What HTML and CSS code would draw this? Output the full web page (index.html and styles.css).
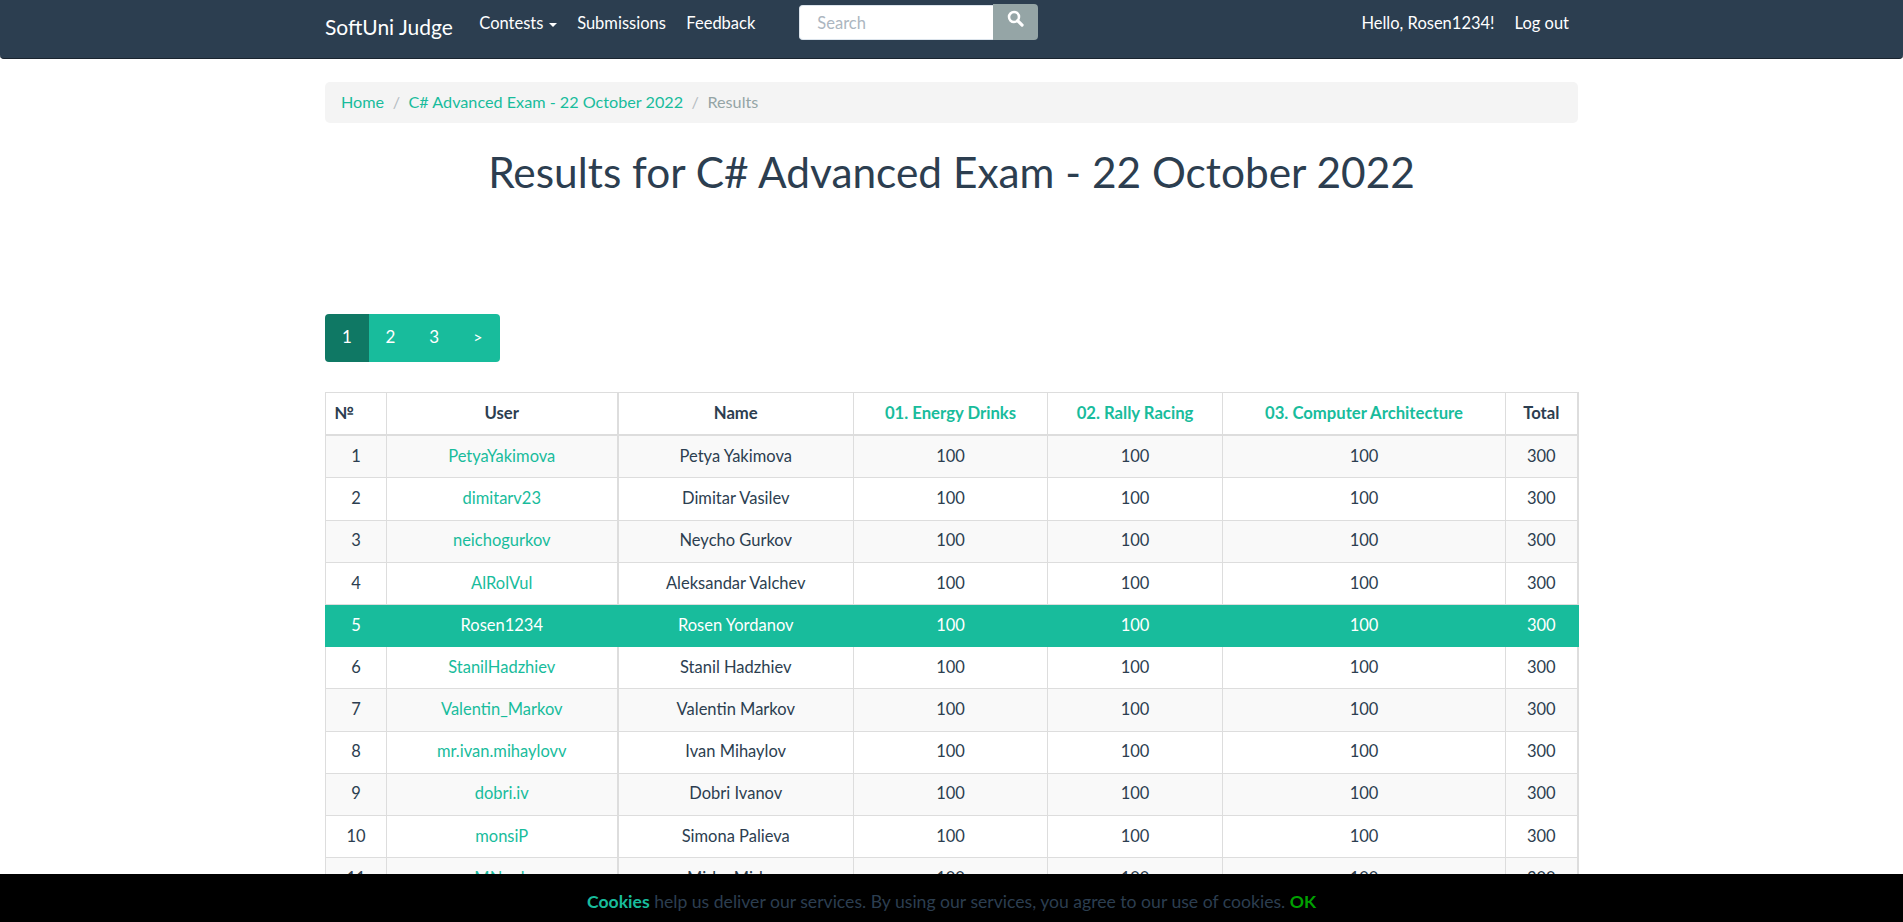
FILE: index.html

```html
<!DOCTYPE html>
<html>
<head>
<meta charset="utf-8">
<title>Results for C# Advanced Exam - 22 October 2022</title>
<link rel="stylesheet" href="styles.css">
</head>

<body>
<nav class="navbar">
    <div class="nav-inner">
        <a class="brand" href="#">SoftUni Judge</a>
        <a class="nav-link" href="#">Contests <span class="caret"></span></a>
        <a class="nav-link" href="#">Submissions</a>
        <a class="nav-link" href="#">Feedback</a>
        <form class="search">
            <input class="search-input" type="text" placeholder="Search">
            <button class="search-btn" type="button">
                <svg width="17" height="17" viewBox="0 0 16 16"><circle cx="6.6" cy="6.6" r="4.7" fill="none" stroke="#fff" stroke-width="2.4"/><path d="M10 10l4.2 4.2" stroke="#fff" stroke-width="3" stroke-linecap="round"/></svg>
            </button>
        </form>
        <div class="nav-right">
            <a class="nav-link" href="#">Hello, Rosen1234!</a>
            <a class="nav-link" href="#">Log out</a>
        </div>
    </div>
</nav>

<div class="container">
    <ol class="breadcrumb">
        <li><a href="#">Home</a></li>
        <li><a href="#">C# Advanced Exam - 22 October 2022</a></li>
        <li class="current">Results</li>
    </ol>

    <h1 class="title">Results for C# Advanced Exam - 22 October 2022</h1>

    <ul class="pagination">
        <li class="active"><a href="#">1</a></li>
        <li><a href="#">2</a></li>
        <li><a href="#">3</a></li>
        <li><a class="next" href="#">&gt;</a></li>
    </ul>

    <table class="results">
        <colgroup>
            <col class="c-num"><col class="c-user"><col class="c-name"><col class="c-t1"><col class="c-t2"><col class="c-t3"><col class="c-total">
        </colgroup>
        <thead>
            <tr>
                <th class="left">№</th>
                <th>User</th>
                <th>Name</th>
                <th><a href="#">01. Energy Drinks</a></th>
                <th><a href="#">02. Rally Racing</a></th>
                <th><a href="#">03. Computer Architecture</a></th>
                <th>Total</th>
            </tr>
        </thead>
        <tbody>
            <tr><td>1</td><td><a href="#">PetyaYakimova</a></td><td>Petya Yakimova</td><td>100</td><td>100</td><td>100</td><td>300</td></tr>
            <tr><td>2</td><td><a href="#">dimitarv23</a></td><td>Dimitar Vasilev</td><td>100</td><td>100</td><td>100</td><td>300</td></tr>
            <tr><td>3</td><td><a href="#">neichogurkov</a></td><td>Neycho Gurkov</td><td>100</td><td>100</td><td>100</td><td>300</td></tr>
            <tr><td>4</td><td><a href="#">AlRolVul</a></td><td>Aleksandar Valchev</td><td>100</td><td>100</td><td>100</td><td>300</td></tr>
            <tr class="me"><td>5</td><td><a href="#">Rosen1234</a></td><td>Rosen Yordanov</td><td>100</td><td>100</td><td>100</td><td>300</td></tr>
            <tr><td>6</td><td><a href="#">StanilHadzhiev</a></td><td>Stanil Hadzhiev</td><td>100</td><td>100</td><td>100</td><td>300</td></tr>
            <tr><td>7</td><td><a href="#">Valentin_Markov</a></td><td>Valentin Markov</td><td>100</td><td>100</td><td>100</td><td>300</td></tr>
            <tr><td>8</td><td><a href="#">mr.ivan.mihaylovv</a></td><td>Ivan Mihaylov</td><td>100</td><td>100</td><td>100</td><td>300</td></tr>
            <tr><td>9</td><td><a href="#">dobri.iv</a></td><td>Dobri Ivanov</td><td>100</td><td>100</td><td>100</td><td>300</td></tr>
            <tr><td>10</td><td><a href="#">monsiP</a></td><td>Simona Palieva</td><td>100</td><td>100</td><td>100</td><td>300</td></tr>
            <tr><td>11</td><td><a href="#">MNook</a></td><td>Mirko Mirkov</td><td>100</td><td>100</td><td>100</td><td>300</td></tr>
        </tbody>
    </table>
</div>

<div class="cookies">
    <span class="cookies-word">Cookies</span> help us deliver our services. By using our services, you agree to our use of cookies. <a class="cookies-ok" href="#">OK</a>
</div>
</body>
</html>
```

FILE: styles.css

```css
html, body {
  height: 100%;
  overflow: hidden;
}

body {
  margin: 0;
  font-family: Lato, "Liberation Sans", sans-serif;
  font-size: 16.5px;
  line-height: 1.42857;
  color: #2c3e50;
  background: #fff;
}

a {
  color: #18bc9c;
  text-decoration: none;
}

.navbar {
  height: 59px;
  box-sizing: border-box;
  background: #2c3e50;
  border-bottom: 1px solid #1a242f;
  border-radius: 0 0 4px 4px;
}

.nav-inner {
  width: 1253px;
  margin: 0 auto;
  display: flex;
  align-items: flex-start;
}

.brand {
  color: #fff;
  font-size: 21px;
  line-height: 27px;
  padding-top: 13px;
  margin-right: 26.5px;
}

.nav-link {
  color: #fff;
  font-size: 16.5px;
  line-height: 23px;
  padding-top: 12px;
  margin-right: 20.5px;
}

.caret {
  display: inline-block;
  width: 0;
  height: 0;
  margin-left: 1px;
  vertical-align: middle;
  border-top: 4px solid #fff;
  border-left: 4px solid transparent;
  border-right: 4px solid transparent;
}

.search {
  display: flex;
  align-items: flex-start;
  margin: 4px 0 0 23.5px;
}

.search-input {
  width: 194px;
  height: 35px;
  box-sizing: border-box;
  padding: 0 17px;
  border: 1px solid #dce4ec;
  border-right: 0;
  border-radius: 4px 0 0 4px;
  font-family: inherit;
  font-size: 16.5px;
  color: #2c3e50;
  background: #fff;
  margin-top: 1px;
}

.search-input::placeholder {
  color: #acb6c0;
}

.search-btn {
  width: 45px;
  height: 36px;
  padding: 0 0 5px;
  border: 0;
  border-radius: 0 4px 4px 0;
  background: #95a5a6;
}

.nav-right {
  margin-left: auto;
  display: flex;
}

.nav-right .nav-link {
  margin-right: 9px;
  margin-left: 11px;
}

.container {
  width: 1253px;
  margin: 0 auto;
}

.breadcrumb {
  display: flex;
  list-style: none;
  margin: 23px 0 0;
  padding: 9px 16px;
  height: 41px;
  box-sizing: border-box;
  background: #f4f4f4;
  border-radius: 5px;
  font-size: 16.2px;
  line-height: 21px;
}

.breadcrumb li + li::before {
  content: "/";
  color: #b4bcc2;
  padding: 0 8.5px;
}

.current {
  color: #95a5a6;
}

.title {
  margin: 25px 0 0;
  font-size: 42.4px;
  font-weight: 400;
  line-height: 47px;
  text-align: center;
}

.pagination {
  display: inline-flex;
  list-style: none;
  margin: 119px 0 0;
  padding: 0;
  vertical-align: top;
}

.pagination a {
  display: block;
  width: 43.7px;
  height: 48px;
  background: #18bc9c;
  color: #fff;
  font-size: 17px;
  line-height: 46px;
  text-align: center;
}

.pagination .next {
  font-size: 16px;
}

.pagination li:first-child a {
  border-radius: 4px 0 0 4px;
}

.pagination li:last-child a {
  border-radius: 0 4px 4px 0;
}

.pagination .active a {
  background: #0f7864;
}

.results {
  display: table;
  width: 1252px;
  margin-top: 30px;
  border-collapse: collapse;
  table-layout: fixed;
}

.c-num { width: 61px; }
.c-user { width: 231px; }
.c-name { width: 236px; }
.c-t1 { width: 194px; }
.c-t2 { width: 175px; }
.c-t3 { width: 283px; }
.c-total { width: 72px; }

.results th,
.results td {
  padding: 8.8px 8px;
  border: 1px solid #ddd;
  text-align: center;
  line-height: 23.6px;
}

.results th {
  padding-top: 8.5px;
  padding-bottom: 9.1px;
  font-size: 16.7px;
  font-weight: 700;
  border-bottom-width: 2px;
}

.results th.left {
  text-align: left;
}

.results th:nth-child(2),
.results td:nth-child(2) {
  border-right-width: 2px;
}

.results th:last-child,
.results td:last-child {
  border-right-width: 2px;
}

.results tbody tr:nth-child(odd) {
  background: #f9f9f9;
}

.results tr.me,
.results tbody tr.me:nth-child(odd) {
  background: #18bc9c;
  color: #fff;
}

.results tr.me td {
  border-color: #18bc9c;
}

.results tr.me a {
  color: #fff;
}

.cookies {
  position: fixed;
  left: 0;
  right: 0;
  bottom: 0;
  height: 48px;
  box-sizing: border-box;
  padding-top: 4px;
  background: #000;
  color: #2c3e50;
  font-size: 17.6px;
  line-height: 47px;
  text-align: center;
}

.cookies-word {
  color: #18bc9c;
  font-weight: 700;
}

.cookies-ok {
  color: #00a000;
  font-weight: 700;
}
```
